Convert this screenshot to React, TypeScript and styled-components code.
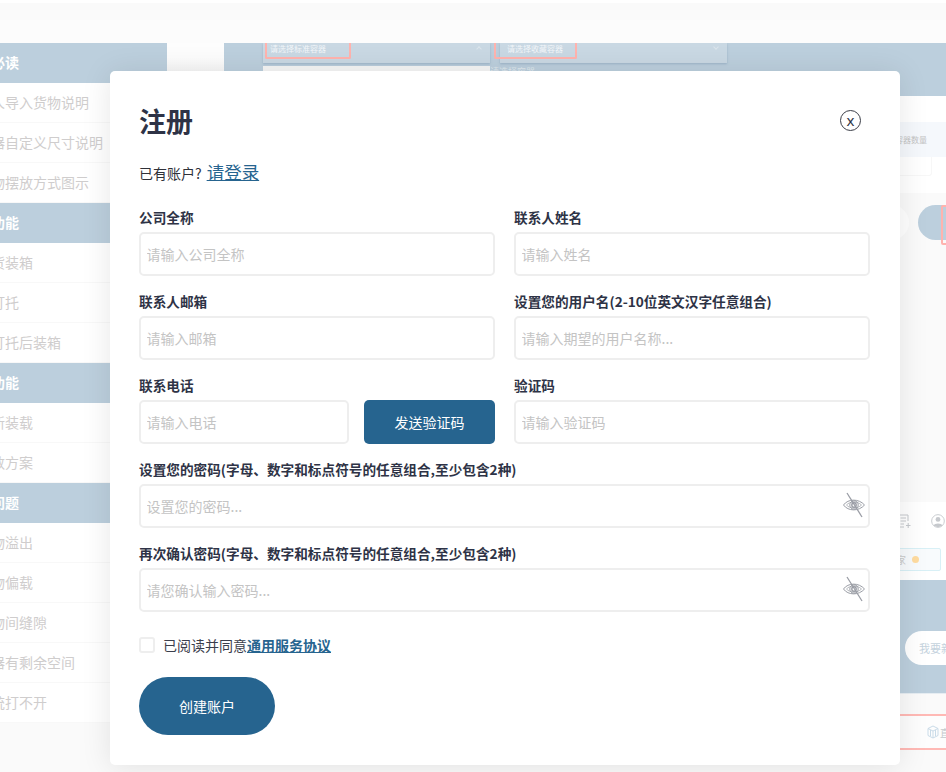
import React from "react";
import styled, { createGlobalStyle } from "styled-components";

const Global = createGlobalStyle`
  html, body { margin: 0; padding: 0; background: #fafafa; }
  body { font-family: "Noto Sans CJK SC", "Noto Sans", sans-serif; }
  * { box-sizing: border-box; }
  #root { width: 946px; height: 772px; overflow: hidden; position: relative; }
`;

const Page = styled.div`
  width: 946px;
  height: 772px;
  position: relative;
  overflow: hidden;
  display: flex;
  flex-direction: column;
  background: #fafafa;
`;
const TopStrip = styled.div<{ $h: number; $bg: string }>`
  height: ${(p) => p.$h}px;
  background: ${(p) => p.$bg};
  flex: none;
`;
const Body = styled.div`
  display: flex;
  flex: 1;
  min-height: 0;
`;
const Sidebar = styled.nav`
  width: 196px;
  margin-left: -29px;
  flex: none;
  align-self: flex-start;
  background: #fff;
`;
const SideHead = styled.div`
  height: 40px;
  padding: 0 0 2px 20px;
  display: flex;
  align-items: center;
  background: #bccfdd;
  color: #fff;
  font-size: 14px;
  font-weight: 700;
`;
const SideItem = styled.div`
  height: 40px;
  padding: 0 0 2px 20px;
  display: flex;
  align-items: center;
  color: #cfcdcd;
  font-size: 14px;
  background: #fff;
  border-bottom: 1px solid #f8f8f8;
  white-space: nowrap;
`;
const Gutter = styled.div`
  width: 57px;
  flex: none;
  background: linear-gradient(#fdfdfd 0, #fdfdfd 15px, #f6f6f6 28px);
  height: 28px;
`;
const Main = styled.main`
  flex: 1;
  min-width: 0;
  display: flex;
  flex-direction: column;
  overflow: hidden;
`;
const SelectPanel = styled.section`
  height: 53px;
  background: #bccfdd;
  padding-left: 39px;
  display: flex;
  gap: 10px;
  flex: none;
`;
const SelectCol = styled.div`
  width: 227px;
  flex: none;
  display: flex;
  flex-direction: column;
  gap: 3px;
`;
const SelectBox = styled.div`
  height: 20px;
  background: #c9d8e3;
  position: relative;
  box-shadow: 0 1px 2px rgba(120, 150, 175, 0.5);
  font-size: 8px;
  color: #f2f6f9;
`;
const Required = styled.span<{ $left: number; $w: number; $pad: number }>`
  position: absolute;
  top: 0;
  left: ${(p) => p.$left}px;
  width: ${(p) => p.$w}px;
  height: 16px;
  border: 2px solid #ffb3ae;
  border-top: 0;
  border-radius: 0 0 2px 2px;
  padding-left: ${(p) => p.$pad}px;
  line-height: 12px;
  white-space: nowrap;
`;
const Chevron = styled.span<{ $up?: boolean }>`
  position: absolute;
  right: 9px;
  top: ${(p) => (p.$up ? 4 : 2)}px;
  width: 4px;
  height: 4px;
  border-right: 1px solid #dbe5ec;
  border-bottom: 1px solid #dbe5ec;
  transform: rotate(${(p) => (p.$up ? 225 : 45)}deg);
`;
const ListBox = styled.div`
  height: 10px;
  background: #f6f6f6;
`;
const SelectedNote = styled.div`
  margin-left: -10px;
  font-size: 9px;
  line-height: 11px;
  color: #dfe8ee;
`;
const WhiteBand = styled.div<{ $h: number }>`
  height: ${(p) => p.$h}px;
  flex: none;
  background: #fff;
`;
const TableHead = styled.div`
  height: 35px;
  flex: none;
  background: #f5f8fc;
  padding-left: 671px;
  display: flex;
  align-items: center;
  font-size: 8px;
  color: #c4c4c4;
  white-space: nowrap;
`;
const TableRow = styled.div`
  height: 36px;
  flex: none;
  background: #fff;
  padding-left: 500px;
`;
const RowInput = styled.div`
  width: 208px;
  height: 19px;
  border: 1px solid #f7f7f7;
  border-top: 0;
  border-radius: 0 0 3px 3px;
`;
const PillRow = styled.div`
  height: 309px;
  flex: none;
  padding: 12px 0 0 619px;
  display: flex;
  gap: 9px;
  align-items: flex-start;
  background: #fafafa;
`;
const GhostPill = styled.div`
  width: 66px;
  height: 35px;
  flex: none;
  border-radius: 18px;
  background: #fff;
`;
const BluePill = styled.div`
  width: 60px;
  height: 35px;
  border-radius: 18px 0 0 18px;
  background: #bccfdd;
  position: relative;
  flex: none;
`;
const PillMark = styled.span`
  position: absolute;
  left: 23px;
  top: 0;
  width: 12px;
  height: 40px;
  border: 2px solid #ffb3ae;
  border-radius: 2px;
`;
const ToolBar = styled.div`
  height: 38px;
  flex: none;
  background: #fff;
  padding-left: 673px;
  display: flex;
  align-items: center;
  gap: 20px;
  color: #c6c9cd;
  svg { flex: none; }
`;
const ChipRow = styled.div`
  height: 40px;
  flex: none;
  background: #fff;
  padding: 8px 0 0 601px;
`;
const Chip = styled.div`
  width: 116px;
  height: 23px;
  border: 1px solid #d8f0f6;
  border-radius: 2px;
  background: #f8fbfd;
  display: flex;
  align-items: center;
  justify-content: flex-end;
  gap: 6px;
  padding-right: 21px;
  font-size: 10px;
  color: #cccccc;
`;
const Dot = styled.i`
  width: 7px;
  height: 7px;
  border-radius: 50%;
  background: #ffdca0;
`;
const NewPanel = styled.section`
  height: 114px;
  flex: none;
  background: #bccfdd;
  padding: 51px 0 0 681px;
  border-bottom: 1px solid #e6edf2;
`;
const NewPill = styled.div`
  width: 120px;
  height: 34px;
  flex: none;
  border-radius: 17px;
  background: #fff;
  padding-left: 14px;
  display: flex;
  align-items: center;
  font-size: 11px;
  color: #c4d2dd;
  white-space: nowrap;
`;
const FooterBox = styled.div`
  height: 36px;
  flex: none;
  margin-top: 20px;
  background: #fdfdfd;
  border-top: 2px solid #ffb9b5;
  border-bottom: 2px solid #ffb9b5;
  padding-left: 703px;
  display: flex;
  align-items: center;
  gap: 1px;
  font-size: 10px;
  color: #c4c9cd;
  white-space: nowrap;
  svg { flex: none; }
`;

const Modal = styled.div`
  position: absolute;
  left: 110px;
  top: 71px;
  width: 790px;
  height: 694px;
  background: #fff;
  border-radius: 5px;
  box-shadow: 0 2px 30px rgba(0, 0, 0, 0.1);
  padding: 28px 30px 0 29px;
`;
const TitleRow = styled.div`
  display: flex;
  justify-content: space-between;
  align-items: center;
  height: 42px;
  padding-right: 9px;
`;
const Title = styled.h1`
  margin: 0;
  padding-top: 1px;
  font-size: 27px;
  font-weight: 700;
  color: #2e3346;
  line-height: 42px;
`;
const CloseButton = styled.button`
  width: 21px;
  height: 21px;
  border: 1.5px solid #3a3d47;
  border-radius: 50%;
  background: #fff;
  padding: 0;
  font: 400 15px/17px "Noto Sans", sans-serif;
  color: #2e3346;
  text-align: center;
`;
const LoginLine = styled.p`
  margin: 16px 0 0;
  height: 30px;
  display: flex;
  align-items: baseline;
  font-size: 14px;
  color: #2f3139;
  line-height: 30px;
`;
const LoginLink = styled.a`
  font-size: 17.5px;
  color: #26648f;
  text-decoration: underline;
  margin-left: 5px;
`;
const Form = styled.div`
  margin-top: 15px;
  display: grid;
  grid-template-columns: 356px 356px;
  column-gap: 19px;
  row-gap: 0;
`;
const Field = styled.div<{ $wide?: boolean }>`
  height: 84px;
  ${(p) => (p.$wide ? "grid-column: 1 / -1;" : "")}
`;
const Label = styled.div`
  height: 30px;
  font-size: 13.65px;
  font-weight: 700;
  color: #2e3346;
  line-height: 30px;
  white-space: nowrap;
`;
const InputWrap = styled.div`
  position: relative;
  flex: 1;
`;
const Input = styled.input`
  display: block;
  width: 100%;
  height: 44px;
  border: 2px solid #eeeeee;
  border-radius: 5px;
  padding: 0 5.5px;
  background: #fff;
  font: 400 14px "Noto Sans CJK SC", sans-serif;
  outline: none;
  &::placeholder { color: #c4c4c4; opacity: 1; }
`;
const EyeSlot = styled.span`
  position: absolute;
  right: 4px;
  top: 8px;
  width: 24px;
  height: 28px;
  color: #9a9da5;
`;
const PhoneRow = styled.div`
  display: flex;
  gap: 15px;
`;
const PhoneInput = styled.div`
  width: 210px;
  flex: none;
`;
const SendButton = styled.button`
  width: 131px;
  height: 44px;
  flex: none;
  border: 0;
  border-radius: 5px;
  background: #26648f;
  color: #fff;
  font: 400 14px "Noto Sans CJK SC", sans-serif;
`;
const AgreeRow = styled.label`
  margin-top: 12px;
  display: flex;
  align-items: center;
  height: 22px;
  font-size: 14px;
  color: #3b3e4c;
`;
const Check = styled.span`
  width: 16px;
  height: 16px;
  border: 2px solid #eeeeee;
  border-radius: 3px;
  margin-right: 8px;
  flex: none;
`;
const AgreeLink = styled.a`
  font-weight: 700;
  color: #26648f;
  text-decoration: underline;
`;
const CreateButton = styled.button`
  display: block;
  margin-top: 21px;
  width: 136px;
  height: 58px;
  border: 0;
  border-radius: 29px;
  background: #26648f;
  color: #fff;
  font: 400 14px "Noto Sans CJK SC", sans-serif;
`;

const EyeOff = () => (
  <svg width="24" height="28" viewBox="0 0 24 28" fill="none" stroke="currentColor" strokeWidth="1">
    <path d="M1.5 13 C6 6.5 17 6.5 22.5 13 C17 19.5 6 19.5 1.5 13 Z" />
    <path d="M4.5 13 C8 9 15.5 9 19.5 13 C15.5 17 8 17 4.5 13 Z" strokeWidth="0.7" />
    <circle cx="12" cy="13" r="4.2" />
    <circle cx="12" cy="13" r="2.2" strokeWidth="1.4" />
    <path d="M5 1 L20 25" strokeWidth="1.3" />
  </svg>
);

const sidebar: [string, string[]][] = [
  ["必读", ["人导入货物说明", "器自定义尺寸说明", "物摆放方式图示"]],
  ["功能", ["货装箱", "打托", "打托后装箱"]],
  ["功能", ["新装载", "数方案"]],
  ["问题", ["物溢出", "物偏载", "物间缝隙", "器有剩余空间", "统打不开"]],
];

export default function App() {
  return (
    <Page>
      <Global />
      <TopStrip $h={3} $bg="#ffffff" />
      <TopStrip $h={17} $bg="#fafafa" />
      <TopStrip $h={23} $bg="#fcfcfc" />
      <Body>
        <Sidebar>
          {sidebar.map(([head, items], i) => (
            <React.Fragment key={i}>
              <SideHead>{head}</SideHead>
              {items.map((t) => (
                <SideItem key={t}>{t}</SideItem>
              ))}
            </React.Fragment>
          ))}
        </Sidebar>
        <Gutter />
        <Main>
          <SelectPanel>
            <SelectCol>
              <SelectBox>
                <Required $left={2} $w={86} $pad={3}>请选择标准容器</Required>
                <Chevron $up />
              </SelectBox>
              <ListBox />
            </SelectCol>
            <SelectCol>
              <SelectBox>
                <Required $left={-6} $w={83} $pad={11}>请选择收藏容器</Required>
                <Chevron />
              </SelectBox>
              <SelectedNote>请选择容器</SelectedNote>
            </SelectCol>
          </SelectPanel>
          <WhiteBand $h={26} />
          <TableHead>容器数量</TableHead>
          <TableRow>
            <RowInput />
          </TableRow>
          <PillRow>
            <GhostPill />
            <BluePill>
              <PillMark />
            </BluePill>
          </PillRow>
          <ToolBar>
            <svg width="14" height="14" viewBox="0 0 14 14" fill="none" stroke="currentColor">
              <path d="M7 13H1.5V1H11V7M3.5 4H9M3.5 7H9M3.5 10H7M9 11.5h4.5M11.2 9v5" />
            </svg>
            <svg width="14" height="14" viewBox="0 0 15 15">
              <circle cx="7.5" cy="7.5" r="6.8" fill="none" stroke="currentColor" />
              <circle cx="7.5" cy="5.8" r="2.6" fill="currentColor" />
              <path d="M2.8 12.5C3.5 9.5 11.5 9.5 12.2 12.5L7.5 14.3Z" fill="currentColor" />
            </svg>
          </ToolBar>
          <ChipRow>
            <Chip>
              家<Dot />
            </Chip>
          </ChipRow>
          <NewPanel>
            <NewPill>我要新增</NewPill>
          </NewPanel>
          <FooterBox>
            <svg width="12" height="14" viewBox="0 0 12 14" fill="none" stroke="#c9dbe8">
              <path d="M6 1L11 3.5V10.5L6 13L1 10.5V3.5ZM1 3.5L6 6L11 3.5M6 6V13M3.5 5V11M8.5 5V11" />
            </svg>
            直
          </FooterBox>
        </Main>
      </Body>
      <Modal>
        <TitleRow>
          <Title>注册</Title>
          <CloseButton>x</CloseButton>
        </TitleRow>
        <LoginLine>
          已有账户?<LoginLink>请登录</LoginLink>
        </LoginLine>
        <Form>
          <Field>
            <Label>公司全称</Label>
            <Input placeholder="请输入公司全称" />
          </Field>
          <Field>
            <Label>联系人姓名</Label>
            <Input placeholder="请输入姓名" />
          </Field>
          <Field>
            <Label>联系人邮箱</Label>
            <Input placeholder="请输入邮箱" />
          </Field>
          <Field>
            <Label>设置您的用户名(2-10位英文汉字任意组合)</Label>
            <Input placeholder="请输入期望的用户名称..." />
          </Field>
          <Field>
            <Label>联系电话</Label>
            <PhoneRow>
              <PhoneInput>
                <Input placeholder="请输入电话" />
              </PhoneInput>
              <SendButton>发送验证码</SendButton>
            </PhoneRow>
          </Field>
          <Field>
            <Label>验证码</Label>
            <Input placeholder="请输入验证码" />
          </Field>
          <Field $wide>
            <Label>设置您的密码(字母、数字和标点符号的任意组合,至少包含2种)</Label>
            <InputWrap>
              <Input placeholder="设置您的密码..." />
              <EyeSlot>
                <EyeOff />
              </EyeSlot>
            </InputWrap>
          </Field>
          <Field $wide>
            <Label>再次确认密码(字母、数字和标点符号的任意组合,至少包含2种)</Label>
            <InputWrap>
              <Input placeholder="请您确认输入密码..." />
              <EyeSlot>
                <EyeOff />
              </EyeSlot>
            </InputWrap>
          </Field>
        </Form>
        <AgreeRow>
          <Check />
          已阅读并同意<AgreeLink>通用服务协议</AgreeLink>
        </AgreeRow>
        <CreateButton>创建账户</CreateButton>
      </Modal>
    </Page>
  );
}
